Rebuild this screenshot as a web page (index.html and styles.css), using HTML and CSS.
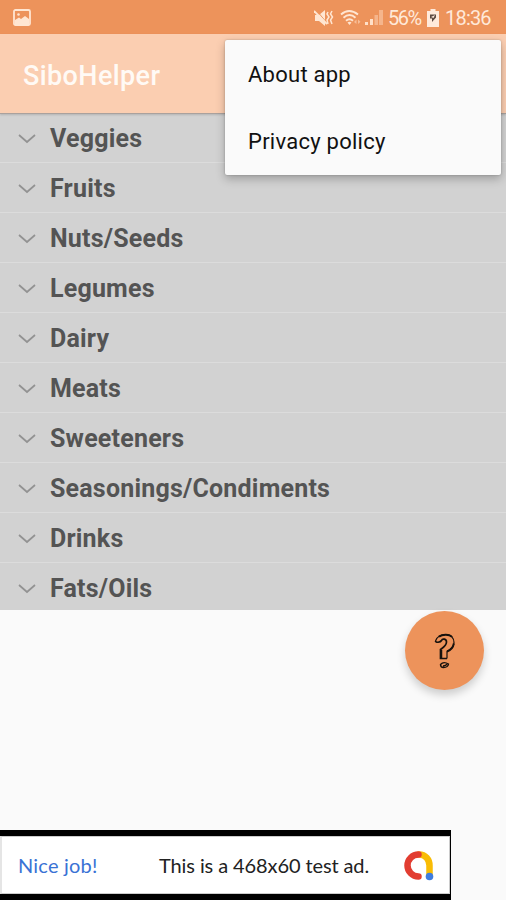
FILE: index.html
```html
<!DOCTYPE html>
<html lang="en">
<head>
    <meta charset="UTF-8">
    <meta name="viewport" content="width=device-width, initial-scale=1.0">
    <title>SiboHelper</title>
    <link rel="stylesheet" href="styles.css">
</head>
<body>
    <div class="status-bar">
        <svg class="icon-picture" width="18" height="17" viewBox="0 0 18 17">
            <rect x="1" y="1" width="16" height="15" rx="1.5" fill="none" stroke="#ffe6d2" stroke-width="1.8"/>
            <path d="M2 11l4-2.500 2 1.500 4-3 4 3v5H2z" fill="#ffe6d2"/>
            <circle cx="5.500" cy="5.500" r="1.300" fill="#ffe6d2"/>
        </svg>
        <div class="status-right">
            <svg class="icon-mute" width="20" height="18" viewBox="0 0 20 18">
                <path d="M1 6h4l6-5v16l-6-5H1z" fill="#ffe6d2"/>
                <path d="M3 2l10 12" stroke="#ed935b" stroke-width="1"/>
                <path d="M0 2l13 13" stroke="#ffe6d2" stroke-width="1.800"/>
                <path d="M14 3l-1 2 2 3-2 3 1 4M18 2l-1.500 3 2 3-2 3 1.500 4" fill="none" stroke="#ffe6d2" stroke-width="1.500"/>
            </svg>
            <svg class="icon-wifi" width="22" height="18" viewBox="0 0 22 18">
                <g fill="none" stroke="#ffe6d2" stroke-width="1.900">
                    <path d="M1 5.500Q9-1.500 18 5.500"/>
                    <path d="M3.500 8.700Q9.500 3.500 15.500 8.700"/>
                    <path d="M6 11.800Q9.500 8.500 13 11.800"/>
                </g>
                <path d="M7.500 13.500q2-1.300 4 0l-2 2.500z" fill="#ffe6d2"/>
                <path d="M14 13l2.500-2.500V15zM18 10.500V15l2.500-2.300z" fill="#f7bd97"/>
            </svg>
            <svg class="icon-signal" width="18" height="17" viewBox="0 0 18 17">
                <path d="M0 13h3v3H0zM5 10h3v6H5z" fill="#ffe0c8"/>
                <path d="M9.500 6h3.500v10H9.500zM14 1h4v15h-4z" fill="#f5b58c"/>
            </svg>
            <span class="battery-level">56%</span>
            <svg class="icon-battery" width="12" height="18" viewBox="0 0 12 18">
                <path d="M0 2h3.500V0h5v2H12v16H0z" fill="#ffeadb"/>
                <path d="M3 5.500h6v3L5 13V9.500H3z" fill="#5c4a42"/>
                <path d="M4 8l4-2-1.500 3z" fill="#ffeadb"/>
            </svg>
            <span class="clock">18:36</span>
        </div>
    </div>

    <header class="app-bar">
        <h1>SiboHelper</h1>
        <div class="menu">
            <div class="menu-item"><span class="about">About app</span></div>
            <div class="menu-item"><span class="privacy">Privacy policy</span></div>
        </div>
    </header>

    <ul class="category-list">
        <li><svg class="chevron" viewBox="0 0 18 10"><path d="M1 1l8 7 8-7"/></svg><span>Veggies</span></li>
        <li><svg class="chevron" viewBox="0 0 18 10"><path d="M1 1l8 7 8-7"/></svg><span>Fruits</span></li>
        <li><svg class="chevron" viewBox="0 0 18 10"><path d="M1 1l8 7 8-7"/></svg><span>Nuts/Seeds</span></li>
        <li><svg class="chevron" viewBox="0 0 18 10"><path d="M1 1l8 7 8-7"/></svg><span>Legumes</span></li>
        <li><svg class="chevron" viewBox="0 0 18 10"><path d="M1 1l8 7 8-7"/></svg><span>Dairy</span></li>
        <li><svg class="chevron" viewBox="0 0 18 10"><path d="M1 1l8 7 8-7"/></svg><span>Meats</span></li>
        <li><svg class="chevron" viewBox="0 0 18 10"><path d="M1 1l8 7 8-7"/></svg><span>Sweeteners</span></li>
        <li><svg class="chevron" viewBox="0 0 18 10"><path d="M1 1l8 7 8-7"/></svg><span>Seasonings/Condiments</span></li>
        <li><svg class="chevron" viewBox="0 0 18 10"><path d="M1 1l8 7 8-7"/></svg><span>Drinks</span></li>
        <li><svg class="chevron" viewBox="0 0 18 10"><path d="M1 1l8 7 8-7"/></svg><span>Fats/Oils</span></li>
    </ul>

    <button class="fab" aria-label="Help">
        <svg width="22" height="36" viewBox="0 0 22 36">
            <path d="M1.500 8C3 3.500 7 1.500 12 1.500c5 0 8 3.500 8 8 0 5-3 7-7 9v7" fill="none" stroke="#17110d" stroke-width="1.200"/>
            <path d="M1.500 8c0 2 5 1.500 6-.5 1-2.500 5-1.500 5 1.500 0 3.500-2.500 5-6 7.500v9H13" fill="none" stroke="#17110d" stroke-width="1.700"/>
            <path d="M5 3.600C8 1.500 15 .5 18 4M7.300 17v8.500M13 18.500q6-2.500 6.800-8" fill="none" stroke="#17110d" stroke-width="1.900"/>
            <path d="M6.500 31.500q3-3.500 8-.5-.5 3.500-5 3.500-3 0-3-3zm2.500 1.500q3 0 4-1.800" fill="none" stroke="#17110d" stroke-width="1.400"/>
        </svg>
    </button>

    <footer class="ad-banner">
        <div class="ad-content">
            <span class="ad-label">Nice job!</span>
            <span class="ad-text">This is a 468x60 test ad.</span>
            <svg class="ad-logo" width="31" height="31" viewBox="0 0 31 31">
                <g fill="none" stroke-width="6.500" stroke-linecap="round">
                    <path d="M16 4.500c6.500 0 10.500 5 10.500 11v10" stroke="#f9bc05"/>
                    <path d="M15.500 4.500A11 11 0 1 0 15.500 26.500" stroke="#e23d31"/>
                </g>
                <circle cx="26.500" cy="26.500" r="3.800" fill="#3f7de0"/>
            </svg>
        </div>
    </footer>
</body>
</html>
```
FILE: styles.css
```css
* {
    margin: 0;
    padding: 0;
    box-sizing: border-box;
    font-family: Roboto, sans-serif;
}

body {
    height: 900px;
    display: flex;
    flex-direction: column;
    background: #fafafa;
    overflow: hidden;
}

.status-bar {
    height: 34px;
    flex: none;
    display: flex;
    align-items: center;
    justify-content: space-between;
    padding: 1px 14px 0 13px;
    background: #ed935b;
    color: #ffe9d9;
    font-size: 20px;
}

.status-right {
    display: flex;
    align-items: center;
}

.icon-wifi { margin-left: 6px; }
.icon-signal { margin-left: 3px; }

.battery-level {
    width: 35px;
    margin-left: 5px;
    letter-spacing: -1.5px;
}

.icon-battery { margin: 0 6px 0 4px; }

.clock {
    width: 47px;
    letter-spacing: -0.8px;
}

.app-bar {
    position: relative;
    height: 80px;
    margin-bottom: -1px;
    flex: none;
    display: flex;
    align-items: center;
    padding: 4px 23px 0;
    background: #fbceb1;
    border-bottom: 1px solid #aaa19d;
    box-shadow: 0 1px 2px rgba(0, 0, 0, 0.15);
    z-index: 1;
}

h1 {
    color: #fffaf5;
    font-size: 27px;
    font-weight: 500;
    letter-spacing: 0.4px;
}

.menu {
    position: absolute;
    top: 6px;
    right: 5px;
    width: 276px;
    height: 135px;
    background: #fafafa;
    border-radius: 2px;
    box-shadow: 0 4px 10px rgba(0, 0, 0, 0.25), 0 0 2px rgba(0, 0, 0, 0.25);
}

.menu-item {
    height: 67px;
    display: flex;
    align-items: center;
    padding: 2px 23px 0;
    color: #111;
    font-size: 22px;
}

.about { letter-spacing: 0.25px; }
.privacy { letter-spacing: 0.25px; }

.category-list {
    flex: none;
    list-style: none;
    background: #d2d2d2;
    height: 497px;
    overflow: hidden;
}

.category-list li {
    height: 50px;
    display: flex;
    align-items: center;
    gap: 14px;
    padding: 2px 0 0 18px;
    border-bottom: 1px solid #dcdcdc;
    color: #545454;
    font-size: 25px;
    font-weight: 700;
    letter-spacing: 0.2px;
}

.chevron {
    width: 18px;
    height: 10px;
    fill: none;
    stroke: #929292;
    stroke-width: 1.7;
}

.fab {
    width: 79px;
    height: 79px;
    flex: none;
    align-self: flex-end;
    margin: 1px 22px 0 0;
    display: flex;
    align-items: center;
    justify-content: center;
    border: none;
    border-radius: 50%;
    background: #ed935b;
    box-shadow: 0 5px 9px rgba(0, 0, 0, 0.18);
}

.ad-banner {
    width: 451px;
    height: 70px;
    margin-top: auto;
    flex: none;
    padding: 6px 1px 6px 0;
    background: linear-gradient(#000, #000) 0 0 / 100% 6px no-repeat, #000;
}

.ad-content {
    height: 58px;
    display: flex;
    align-items: center;
    padding: 0 15px 0 16px;
    background: #fff;
    border: 1px solid #ccc;
    border-left: 2px solid #e5e5e5;
}

.ad-label,
.ad-text {
    font-family: Lato, sans-serif;
    font-size: 20px;
    white-space: nowrap;
}

.ad-label {
    width: 141px;
    color: #3972d5;
    letter-spacing: 0.2px;
}

.ad-text {
    color: #222;
    letter-spacing: -0.1px;
}

.ad-logo {
    margin-left: auto;
    overflow: visible;
}
```
